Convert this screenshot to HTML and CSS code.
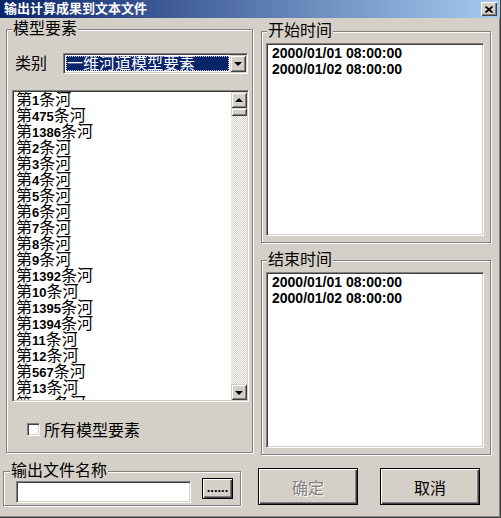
FILE: index.html
```html
<!DOCTYPE html>
<html lang="zh-CN">
<head>
    <meta charset="UTF-8">
    <title>输出计算成果到文本文件</title>
    <link rel="stylesheet" href="styles.css">
</head>
<body>
<div class="window">
    <div class="titlebar">
        <span class="title">输出计算成果到文本文件</span>
        <span class="close_btn">
            <svg width="8" height="7" viewBox="0 0 8 7"><path d="M0.5 0.5 L7.5 6.5 M7.5 0.5 L0.5 6.5" stroke="#000" stroke-width="1.8" fill="none"/></svg>
        </span>
    </div>
    <div class="dlg_body">
        <div class="left_col">
            <!-- 模型要素 -->
            <fieldset class="group model_group">
                <legend>模型要素</legend>
                <div class="type_row">
                    <span class="type_label">类别</span>
                    <div class="combo">
                        <span class="combo_sel">一维河道模型要素</span>
                        <span class="drop_btn"><i class="arrow_down"></i></span>
                    </div>
                </div>
                <div class="listbox river_list">
                    <div class="list_items">
                        <div class="item">第<b>1</b>条河</div>
                        <div class="item">第<b>475</b>条河</div>
                        <div class="item">第<b>1386</b>条河</div>
                        <div class="item">第<b>2</b>条河</div>
                        <div class="item">第<b>3</b>条河</div>
                        <div class="item">第<b>4</b>条河</div>
                        <div class="item">第<b>5</b>条河</div>
                        <div class="item">第<b>6</b>条河</div>
                        <div class="item">第<b>7</b>条河</div>
                        <div class="item">第<b>8</b>条河</div>
                        <div class="item">第<b>9</b>条河</div>
                        <div class="item">第<b>1392</b>条河</div>
                        <div class="item">第<b>10</b>条河</div>
                        <div class="item">第<b>1395</b>条河</div>
                        <div class="item">第<b>1394</b>条河</div>
                        <div class="item">第<b>11</b>条河</div>
                        <div class="item">第<b>12</b>条河</div>
                        <div class="item">第<b>567</b>条河</div>
                        <div class="item">第<b>13</b>条河</div>
                        <div class="item">第<b>568</b>条河</div>
                    </div>
                    <div class="vscroll">
                        <span class="sb_btn"><i class="arrow_up"></i></span>
                        <span class="sb_thumb"></span>
                        <span class="sb_track"></span>
                        <span class="sb_btn"><i class="arrow_down"></i></span>
                    </div>
                </div>
                <div class="check_row"><span class="checkbox"></span>所有模型要素</div>
            </fieldset>
            <!-- 输出文件 -->
            <fieldset class="group file_group">
                <legend>输出文件名称</legend>
                <div class="file_row">
                    <span class="edit"></span>
                    <span class="btn browse_btn">......</span>
                </div>
            </fieldset>
        </div>
        <div class="right_col">
            <fieldset class="group time_group start_group">
                <legend>开始时间</legend>
                <div class="listbox time_list">
                    <div class="list_items">
                        <div class="time_item">2000/01/01 08:00:00</div>
                        <div class="time_item">2000/01/02 08:00:00</div>
                    </div>
                </div>
            </fieldset>
            <fieldset class="group time_group end_group">
                <legend>结束时间</legend>
                <div class="listbox time_list">
                    <div class="list_items">
                        <div class="time_item">2000/01/01 08:00:00</div>
                        <div class="time_item">2000/01/02 08:00:00</div>
                    </div>
                </div>
            </fieldset>
            <div class="btn_row">
                <span class="btn big_btn disabled">确定</span>
                <span class="btn big_btn">取消</span>
            </div>
        </div>
    </div>
</div>
</body>
</html>
```

FILE: styles.css
```css
* {
    box-sizing: border-box;
}

body {
    margin: 0;
    background-color: #d4d0c8;
    color: #000;
    font-family: "Liberation Sans", "Noto Sans CJK SC", sans-serif;
}

.window {
    width: 501px;
    height: 518px;
    overflow: hidden;
    background-color: #d4d0c8;
    border-right: 1px solid #404040;
    border-bottom: 1px solid #404040;
    box-shadow: inset -1px -1px 0 #808080;
}

/* 标题栏 */
.titlebar {
    height: 18px;
    display: flex;
    align-items: center;
    justify-content: space-between;
    padding: 0 3px 0 4px;
    background: linear-gradient(to right, #0a246a, #a6caf0);
}

.title {
    color: #fff;
    font-weight: bold;
    font-size: 13px;
    line-height: 18px;
}

.close_btn {
    width: 16px;
    height: 14px;
    display: flex;
    align-items: center;
    justify-content: center;
    background-color: #d4d0c8;
    box-shadow: inset 1px 1px 0 #fff, inset -1px -1px 0 #404040, inset -2px -2px 0 #808080;
}

.dlg_body {
    display: flex;
}

.left_col {
    width: 253px;
    flex: none;
}

.right_col {
    flex: 1;
}

/* 分组框 */
.group {
    margin: 0;
    padding: 0;
    min-width: 0;
    border: 1px solid #808080;
    box-shadow: 1px 1px 0 #fff, inset 1px 1px 0 #fff;
}

.group legend {
    font-size: 16px;
    line-height: 18px;
    padding: 0 1px;
    margin-left: 5px;
    background-color: #d4d0c8;
}

.model_group {
    width: 247px;
    margin: 2px 0 0 6px;
    padding-bottom: 14px;
}

.type_row {
    display: flex;
    align-items: center;
    height: 21px;
    margin: 15px 0 0 8px;
}

.type_label {
    width: 48px;
    font-size: 16px;
    line-height: 21px;
}

/* 下拉框 */
.combo {
    width: 185px;
    height: 21px;
    display: flex;
    padding: 1px;
    background-color: #fff;
    border: 1px solid;
    border-color: #808080 #fff #fff #808080;
    box-shadow: inset 1px 1px 0 #404040, inset -1px -1px 0 #d4d0c8;
}

.combo_sel {
    flex: 1;
    margin: 1px;
    padding-left: 1px;
    background-color: #0a246a;
    color: #fff;
    font-size: 16px;
    line-height: 15px;
    white-space: nowrap;
    overflow: hidden;
    outline: 1px dotted #c8c8d8;
    outline-offset: -1px;
}

.drop_btn, .sb_btn {
    width: 16px;
    flex: none;
    display: flex;
    align-items: center;
    justify-content: center;
    background-color: #d4d0c8;
    box-shadow: inset 1px 1px 0 #d4d0c8, inset -1px -1px 0 #404040, inset 2px 2px 0 #fff, inset -2px -2px 0 #808080;
}

.arrow_down {
    display: block;
    border: 4px solid transparent;
    border-top-color: #000;
    border-bottom: 0;
    margin-top: 1px;
}

.arrow_up {
    display: block;
    border: 4px solid transparent;
    border-bottom-color: #000;
    border-top: 0;
    margin-top: -1px;
}

/* 列表框 */
.listbox {
    display: flex;
    padding: 1px;
    background-color: #fff;
    border: 1px solid;
    border-color: #808080 #fff #fff #808080;
    box-shadow: inset 1px 1px 0 #404040, inset -1px -1px 0 #d4d0c8;
}

.list_items {
    flex: 1;
    overflow: hidden;
    padding-left: 2px;
}

.river_list {
    width: 237px;
    height: 312px;
    margin: 16px 0 0 5px;
}

.item {
    height: 16px;
    font-size: 16px;
    line-height: 16px;
    white-space: nowrap;
}

.item b {
    font-size: 13px;
}

.vscroll {
    width: 16px;
    flex: none;
    display: flex;
    flex-direction: column;
}

.sb_btn {
    height: 16px;
}

.sb_thumb {
    height: 8px;
    flex: none;
    background-color: #d4d0c8;
    box-shadow: inset 1px 1px 0 #d4d0c8, inset -1px -1px 0 #404040, inset 2px 2px 0 #fff, inset -2px -2px 0 #808080;
}

.sb_track {
    flex: 1;
    background: repeating-conic-gradient(#fff 0 25%, #d4d0c8 0 50%) 0 0 / 2px 2px;
}

.check_row {
    display: flex;
    align-items: center;
    height: 18px;
    margin: 18px 0 0 20px;
    font-size: 16px;
}

.checkbox {
    width: 13px;
    height: 13px;
    margin-right: 4px;
    background-color: #fff;
    border: 1px solid;
    border-color: #808080 #fff #fff #808080;
    box-shadow: inset 1px 1px 0 #404040, inset -1px -1px 0 #d4d0c8;
}

/* 输出文件 */
.file_group {
    width: 238px;
    margin: 9px 0 0 3px;
    padding-bottom: 2px;
}

.file_group legend {
    margin-left: 6px;
}

.file_row {
    display: flex;
    align-items: flex-start;
    margin: 1px 0 0 12px;
}

.edit {
    width: 175px;
    height: 22px;
    background-color: #fff;
    border: 1px solid;
    border-color: #808080 #fff #fff #808080;
    box-shadow: inset 1px 1px 0 #404040, inset -1px -1px 0 #d4d0c8;
}

/* 按钮 */
.btn {
    display: flex;
    align-items: center;
    justify-content: center;
    background-color: #d4d0c8;
    border: 1px solid #000;
    box-shadow: inset 1px 1px 0 #fff, inset -1px -1px 0 #404040, inset -2px -2px 0 #808080;
}

.browse_btn {
    width: 31px;
    height: 21px;
    margin: -3px 0 0 11px;
    font-size: 13px;
    font-weight: bold;
    line-height: 19px;
    padding-bottom: 2px;
}

.big_btn {
    width: 100px;
    height: 37px;
    font-size: 16px;
}

.disabled {
    color: #808080;
    text-shadow: 1px 1px 0 #fff;
}

.btn_row {
    display: flex;
    gap: 22px;
    margin: 13px 0 0 5px;
}

/* 时间 */
.time_group {
    width: 230px;
    margin-left: 8px;
    padding-bottom: 6px;
}

.start_group {
    margin-top: 4px;
}

.end_group {
    margin-top: 8px;
}

.time_list {
    width: 218px;
    margin: 3px 0 0 4px;
}

.start_group .time_list {
    height: 193px;
}

.end_group .time_list {
    height: 176px;
}

.time_item {
    font-size: 14px;
    font-weight: bold;
    line-height: 16px;
    padding-left: 2px;
    white-space: nowrap;
}
```
